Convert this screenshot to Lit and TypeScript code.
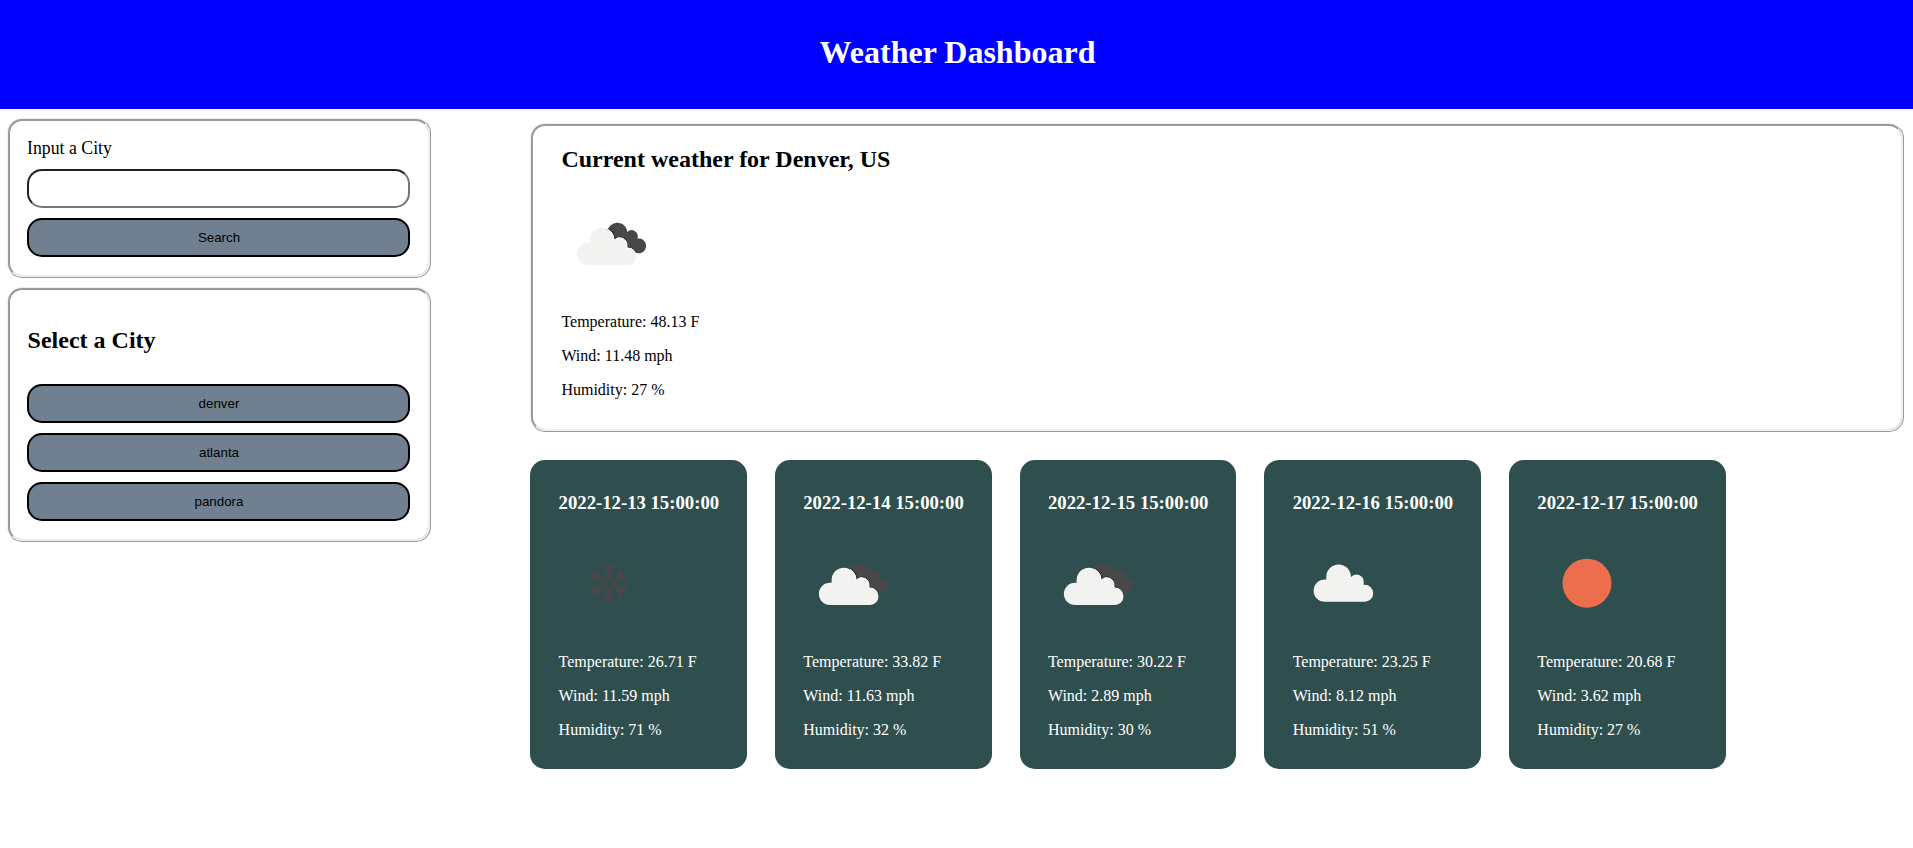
import { LitElement, html, css, svg } from "lit";
import { customElement, property } from "lit/decorators.js";

const CLOUD = "M27 72A11.1 11.1 0 0 1 27 49.8L28.6 49.8V47A12.3 12.3 0 0 1 53.2 47V47.2A7.3 7.3 0 0 1 66 52.2V55.1L67 55A8.5 8.5 0 0 1 67 72Z";
const BACK = "M46.3 39A10 10 0 0 1 66 37.3L66.3 38.9A6.2 6.2 0 0 1 76.4 45.6A7.4 7.4 0 1 1 73.5 59L60 62L48 46Z";

const icons: Record<string, unknown> = {
  broken: svg`
    <clipPath id="back"><path d=${BACK}/></clipPath>
    <path d=${BACK} fill="#48484a"/>
    <path d=${CLOUD} fill="#f2f2f0"/>
    <g clip-path="url(#back)" fill="none">
      <path d=${CLOUD} stroke="#1f1f21" stroke-width="2.2"/>
      <path d=${CLOUD} fill="#f2f2f0" stroke="#fff" stroke-width="1"/>
    </g>`,
  cloud: svg`<path transform="translate(4.7 -3.2)" fill="#f2f2f0" d=${CLOUD}/>`,
  sun: svg`<circle cx="50" cy="50.2" r="24.5" fill="#ec6e4c"/>`,
  snow: svg`<g fill="none" stroke="#48484a" stroke-width="3.4" stroke-linecap="round">
    <circle cx="49.8" cy="50.3" r="4.8"/>
    ${[0, 60, 120, 180, 240, 300].map((a) => svg`<path transform="rotate(${a} 49.8 50.3)" d="M49.8 45V31.6M44.3 33.8L49.8 39.2L55.3 33.8"/>`)}
  </g>`,
};

interface Reading { title: string; icon: string; temp: string; wind: string; humidity: string; }

@customElement("weather-readings")
class WeatherReadings extends LitElement {
  @property({ attribute: false }) data!: Reading;
  static styles = css`
    :host { display: block; font-size: 16px; line-height: 18px; }
    .icon { display: block; width: 100px; height: 100px; }
    .line { margin: 16px 0; }
    .line:first-of-type { margin-top: 20px; }
    .line:last-of-type { margin-bottom: 0; }
  `;
  render() {
    const d = this.data;
    return html`<svg class="icon" viewBox="0 0 100 100">${icons[d.icon]}</svg>
      <p class="line">Temperature: ${d.temp} F</p>
      <p class="line">Wind: ${d.wind} mph</p>
      <p class="line">Humidity: ${d.humidity} %</p>`;
  }
}

@customElement("app-root")
class AppRoot extends LitElement {
  current: Reading = { title: "Current weather for Denver, US", icon: "broken", temp: "48.13", wind: "11.48", humidity: "27" };
  days: Reading[] = [
    { title: "2022-12-13 15:00:00", icon: "snow", temp: "26.71", wind: "11.59", humidity: "71" },
    { title: "2022-12-14 15:00:00", icon: "broken", temp: "33.82", wind: "11.63", humidity: "32" },
    { title: "2022-12-15 15:00:00", icon: "broken", temp: "30.22", wind: "2.89", humidity: "30" },
    { title: "2022-12-16 15:00:00", icon: "cloud", temp: "23.25", wind: "8.12", humidity: "51" },
    { title: "2022-12-17 15:00:00", icon: "sun", temp: "20.68", wind: "3.62", humidity: "27" },
  ];
  static styles = css`
    :host { display: block; height: 848px; overflow: hidden; background: #fff; color: #000; font-family: "Liberation Serif", serif; }
    * { box-sizing: border-box; }
    .header { height: 109px; background: #00f; color: #fff; padding: 33px 0 0 2px; text-align: center; }
    .title { margin: 0; font-size: 32px; line-height: 38px; }
    .body { display: flex; }
    .side { width: 424px; margin: 9px 0 0 7px; display: flex; flex-direction: column; gap: 9px; flex: none; }
    .box { border: 3px ridge #eee; border-radius: 15px; }
    .panel { padding: 17px; display: flex; flex-direction: column; gap: 10px; }
    .search { height: 160px; }
    .select { height: 255px; }
    .label { font-size: 17.8px; line-height: 21px; }
    .heading { margin: 20px 0; padding-left: .6px; font-size: 24px; line-height: 27px; }
    .field, .btn { width: 383px; height: 39px; border-radius: 15px; margin: 0; flex: none; }
    .field { border: 2px inset #767676; background: #fff; }
    .btn { border: 2px solid #000; background: #708090; font: 13.33px/17px "Liberation Sans", sans-serif; color: #000; padding: 0 0 0 1px; }
    .main { flex: 1; margin: 14px 9px 0 99px; }
    .current { height: 309px; padding: 20px 28.4px; }
    .now { margin: 0 0 20px; font-size: 24px; line-height: 27px; }
    .days { display: flex; gap: 28px; margin-top: 28px; padding-left: .4px; }
    .day { width: 216.7px; height: 309px; border-radius: 15px; background: #2f4f4f; color: #fff; padding: 31px 28px 0 28.2px; flex: none; }
    .date { margin: 0 0 18px; font-size: 18.72px; line-height: 24px; white-space: nowrap; }
  `;
  render() {
    return html`<header class="header"><h1 class="title">Weather Dashboard</h1></header>
      <div class="body">
        <aside class="side">
          <section class="box panel search">
            <label class="label" for="city">Input a City</label>
            <input class="field" id="city" />
            <button class="btn">Search</button>
          </section>
          <section class="box panel select">
            <h2 class="heading">Select a City</h2>
            ${["denver", "atlanta", "pandora"].map((c) => html`<button class="btn">${c}</button>`)}
          </section>
        </aside>
        <main class="main">
          <section class="box current">
            <h2 class="now">${this.current.title}</h2>
            <weather-readings .data=${this.current}></weather-readings>
          </section>
          <div class="days">
            ${this.days.map((d) => html`<article class="day"><h3 class="date">${d.title}</h3><weather-readings .data=${d}></weather-readings></article>`)}
          </div>
        </main>
      </div>`;
  }
}
